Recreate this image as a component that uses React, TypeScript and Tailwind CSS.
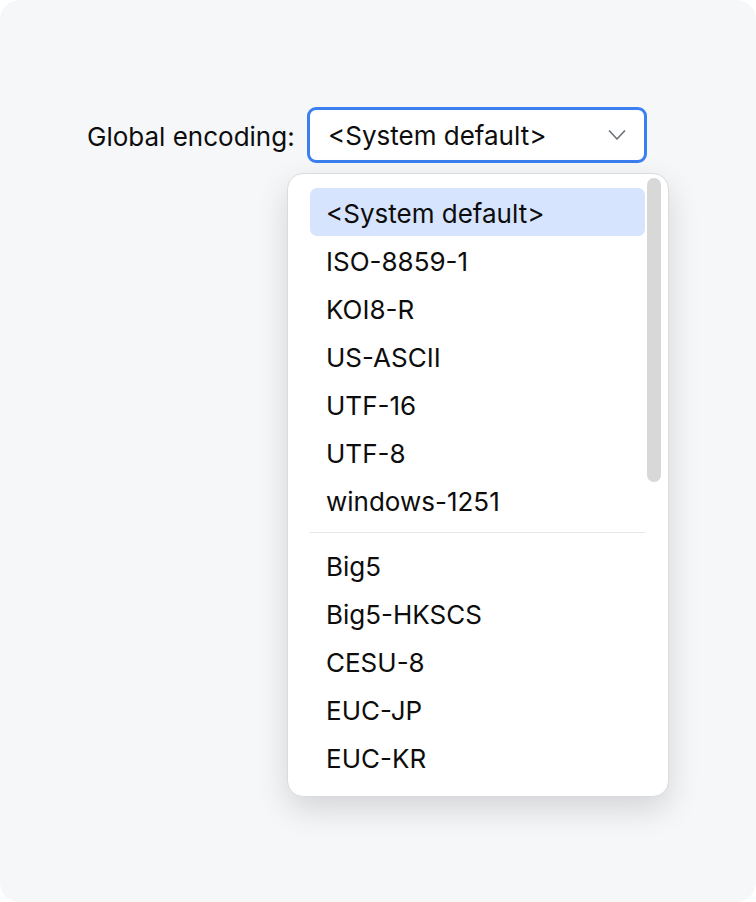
import React from "react";

const top = ["<System default>", "ISO-8859-1", "KOI8-R", "US-ASCII", "UTF-16", "UTF-8", "windows-1251"];
const rest = ["Big5", "Big5-HKSCS", "CESU-8", "EUC-JP", "EUC-KR"];

export default function App() {
  return (
    <div className="bg-white w-[756px] h-[902px]" style={{ fontFamily: "Inter, 'Noto Sans', sans-serif" }}>
      <div className="w-full h-full bg-[#f6f7f9] rounded-[20px] pt-[107px] pl-[87px]">
        <div className="flex items-center">
          <span className="text-[26px] leading-[32px] pt-[3px] text-[#0d0d0d] w-[220px]">Global encoding:</span>
          <div className="relative">
            <div className="w-[340px] h-[56px] border-[3px] border-[#3b7ff0] rounded-[9px] bg-white flex items-center pl-[18px] pr-[18px] justify-between">
              <span className="text-[26px] leading-[32px] pt-[2px] text-[#0d0d0d]">&lt;System default&gt;</span>
              <svg width="18" height="12" viewBox="0 0 18 12" fill="none" stroke="#6f737a" strokeWidth="1.7" strokeLinecap="round" strokeLinejoin="round">
                <path d="M1.5 2l7.5 8 7.5-8" />
              </svg>
            </div>
            <div className="absolute left-[-20px] top-[66px] w-[382px] bg-white rounded-[16px] border border-[#d9dbe0] shadow-[0_12px_32px_rgba(0,0,0,0.14)] pl-[22px] pr-[23px] pt-[14px] pb-[15px]">
              <div className="flex flex-col">
                {top.map((t, i) => (
                  <div key={t} className={`h-[48px] flex items-center pt-[2px] pl-[16px] rounded-[7px] text-[26px] text-[#0d0d0d] ${i === 0 ? "bg-[#d6e4fd]" : ""}`}>
                    {t}
                  </div>
                ))}
              </div>
              <div className="h-px bg-[#e6e7ea] my-[8px]" />
              <div className="flex flex-col">
                {rest.map((t) => (
                  <div key={t} className="h-[48px] flex items-center pt-[2px] pl-[16px] text-[26px] text-[#0d0d0d]">
                    {t}
                  </div>
                ))}
              </div>
              <div className="absolute right-[7px] top-[4px] w-[14px] h-[304px] rounded-full bg-[#d8d8d8]" />
            </div>
          </div>
        </div>
      </div>
    </div>
  );
}
